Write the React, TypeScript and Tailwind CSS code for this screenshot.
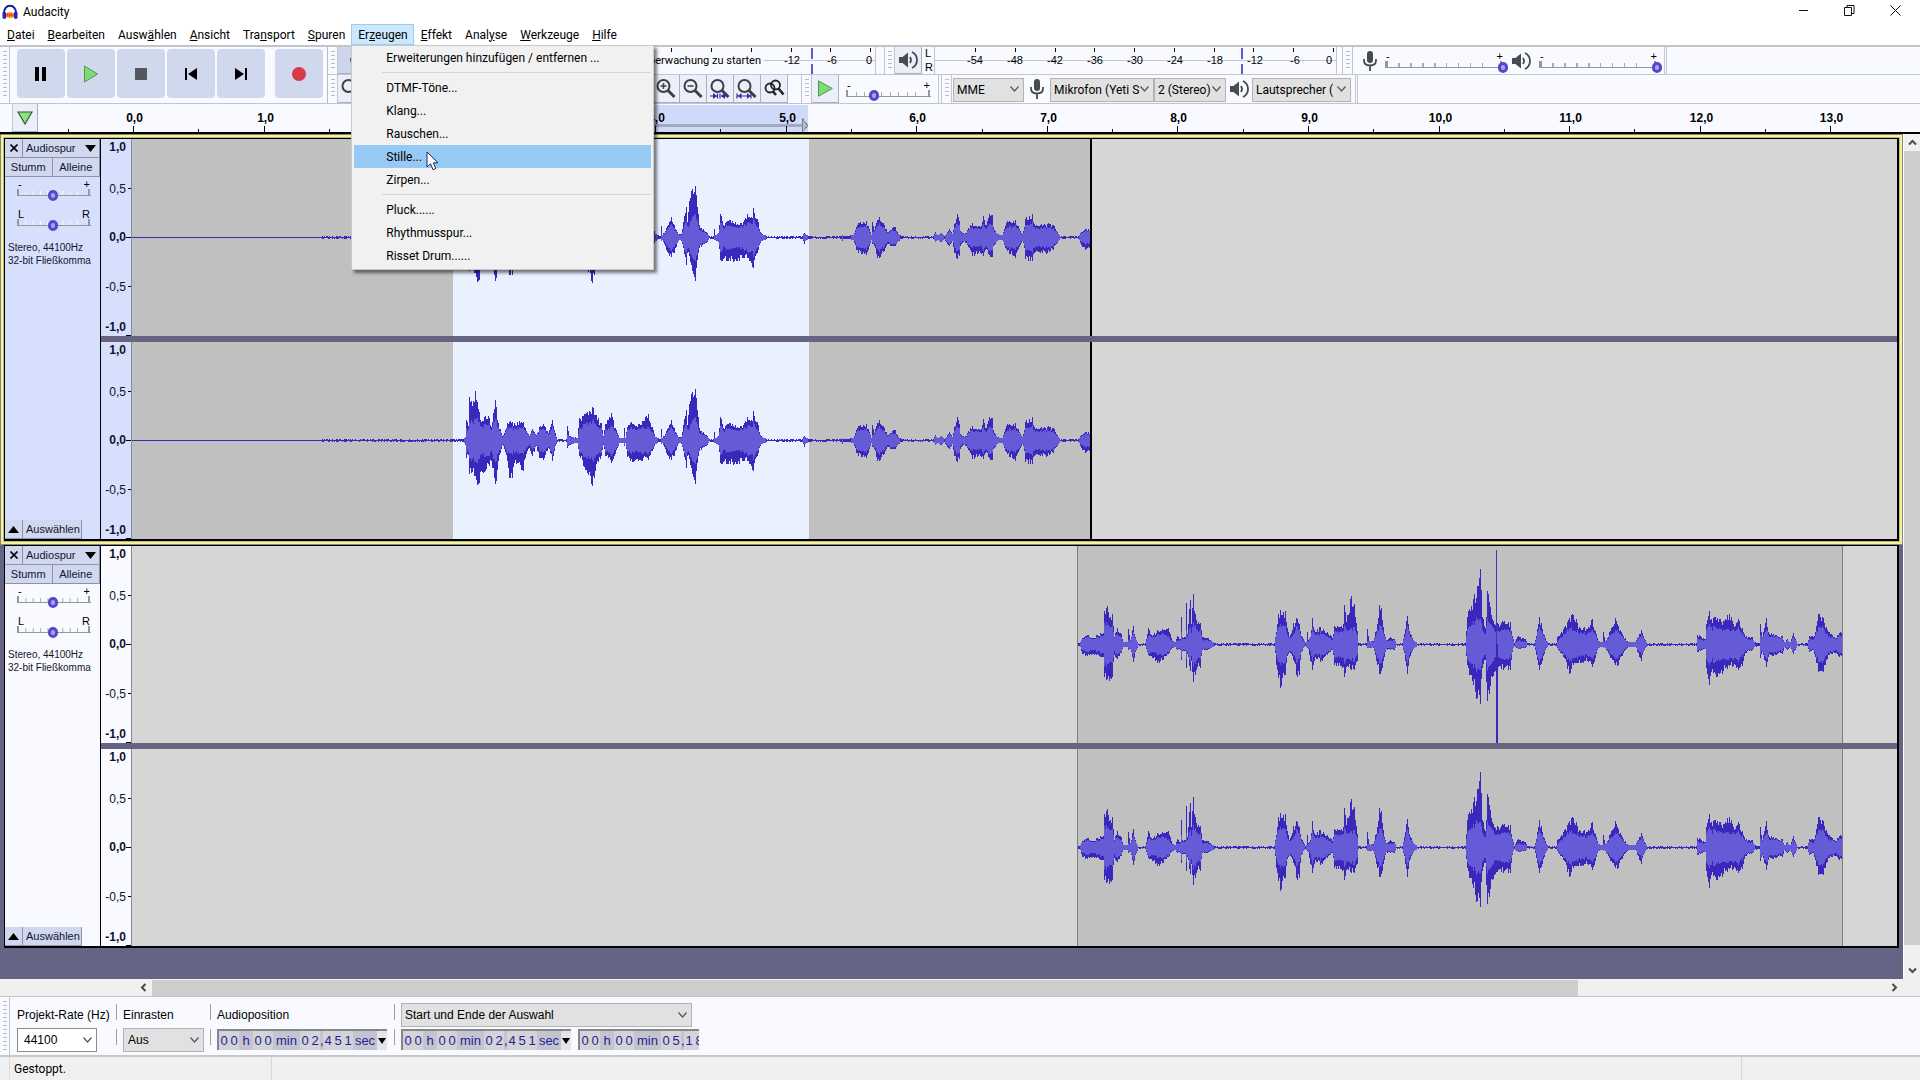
import type { ReactNode } from "react";

type Point = [x: number, top: number, bottom: number];

interface Clip {
  start: number;
  end: number;
  wave: Point[];
}

const RULER_ZERO = 96;
const SECOND = 130.55;

// envelope of the first clip: x, peak above the centre line, peak below it
const WAVE_A: Point[] = [
  [0, 0, 0], [188, 0, 0], [190, 1, 1], [331, 1, 1], [333, 3, 4], [334, 20, 17], [336, 14, 14], [337, 43, 33], [340, 34, 31],
  [343, 49, 35], [345, 38, 44], [347, 28, 42], [349, 18, 30], [353, 24, 30], [357, 22, 25], [359, 13, 20], [363, 40, 43],
  [364, 33, 40], [366, 17, 20], [370, 4, 4], [372, 7, 8], [375, 17, 20], [377, 18, 37], [380, 18, 37], [382, 17, 22],
  [391, 18, 30], [393, 12, 17], [397, 4, 7], [400, 11, 15], [404, 5, 5], [407, 13, 17], [411, 16, 19], [416, 7, 7],
  [420, 20, 20], [423, 7, 5], [425, 1, 1], [434, 1, 1], [435, 14, 7], [437, 4, 4], [445, 2, 2], [447, 22, 15], [455, 28, 32],
  [460, 33, 45], [463, 25, 30], [469, 17, 15], [471, 4, 4], [473, 16, 15], [479, 27, 22], [483, 12, 13], [487, 2, 2],
  [491, 2, 2], [492, 12, 5], [493, 2, 2], [495, 13, 16], [498, 17, 20], [508, 15, 19], [516, 26, 19], [520, 13, 10],
  [523, 3, 3], [528, 1, 1], [529, 11, 3], [530, 2, 2], [535, 11, 14], [539, 20, 19], [542, 12, 15], [546, 3, 3], [549, 3, 3],
  [551, 15, 10], [554, 30, 27], [555, 15, 15], [557, 36, 18], [560, 48, 33], [563, 51, 43], [565, 30, 22], [567, 12, 10],
  [575, 4, 4], [577, 1, 1], [581, 1, 1], [582, 8, 2], [583, 2, 2], [586, 4, 4], [588, 23, 22], [591, 12, 21], [598, 17, 23],
  [605, 13, 23], [611, 15, 20], [615, 23, 20], [619, 20, 25], [621, 29, 30], [625, 18, 15], [628, 5, 5], [631, 2, 2],
  [635, 1, 1], [670, 1, 1], [672, 4, 6], [674, 2, 2], [680, 1, 1], [709, 1, 1], [710, 2, 3], [711, 1, 1], [721, 2, 2],
  [724, 10, 12], [726, 14, 15], [734, 16, 17], [737, 8, 8], [739, 2, 2], [740, 15, 6], [742, 7, 8], [745, 17, 20],
  [747, 20, 20], [752, 12, 13], [755, 5, 6], [760, 9, 8], [763, 10, 8], [766, 3, 3], [769, 1, 1], [801, 1, 1], [803, 5, 4],
  [805, 2, 2], [809, 4, 4], [812, 1, 1], [817, 8, 8], [820, 3, 3], [822, 13, 15], [825, 23, 21], [827, 16, 18], [828, 6, 8],
  [832, 3, 3], [835, 7, 7], [840, 14, 18], [848, 10, 15], [851, 21, 18], [853, 12, 12], [857, 23, 17], [860, 22, 19],
  [861, 10, 8], [865, 3, 3], [870, 2, 2], [873, 11, 10], [875, 16, 13], [883, 17, 20], [886, 11, 11], [890, 3, 3],
  [892, 10, 10], [893, 18, 21], [900, 23, 23], [902, 13, 15], [908, 12, 15], [915, 13, 15], [921, 12, 12], [925, 5, 5],
  [928, 1, 1], [946, 1, 1], [949, 5, 7], [953, 8, 12], [958, 7, 10],
];

const WAVE_B: Point[] = [
  [945, 0, 0], [948, 2, 2], [950, 6, 9], [955, 9, 11], [961, 6, 9], [968, 11, 12], [971, 11, 12], [972, 33, 32], [974, 36, 35],
  [980, 30, 32], [982, 7, 10], [985, 16, 14], [989, 10, 8], [991, 2, 2], [995, 2, 2], [996, 15, 5], [998, 4, 4],
  [1001, 18, 17], [1003, 7, 7], [1006, 1, 1], [1013, 1, 1], [1016, 16, 10], [1020, 8, 13], [1025, 14, 18], [1031, 14, 15],
  [1036, 16, 9], [1040, 3, 3], [1043, 2, 2], [1045, 8, 5], [1048, 5, 5], [1049, 27, 15], [1050, 7, 6], [1053, 7, 6],
  [1054, 41, 23], [1055, 10, 9], [1058, 44, 26], [1059, 20, 16], [1061, 50, 37], [1063, 30, 30], [1065, 20, 22],
  [1068, 21, 23], [1070, 7, 5], [1075, 6, 5], [1080, 2, 2], [1083, 1, 1], [1142, 1, 1], [1144, 12, 20], [1146, 30, 33],
  [1148, 34, 43], [1153, 33, 30], [1155, 16, 11], [1157, 7, 7], [1161, 21, 15], [1165, 25, 32], [1167, 20, 30],
  [1169, 8, 7], [1173, 1, 1], [1174, 2, 2], [1175, 12, 3], [1176, 4, 4], [1178, 7, 16], [1180, 26, 25], [1183, 12, 12],
  [1188, 17, 17], [1195, 12, 10], [1200, 6, 5], [1202, 18, 20], [1211, 20, 22], [1212, 39, 32], [1214, 22, 22],
  [1219, 48, 25], [1222, 40, 25], [1225, 13, 16], [1226, 1, 1], [1234, 1, 1], [1235, 15, 3], [1237, 3, 3], [1241, 3, 3],
  [1245, 20, 20], [1247, 39, 29], [1249, 36, 26], [1252, 10, 12], [1254, 4, 4], [1258, 7, 5], [1262, 5, 5], [1264, 1, 1],
  [1270, 1, 1], [1272, 10, 8], [1275, 28, 29], [1277, 13, 13], [1281, 4, 4], [1285, 1, 1], [1333, 1, 1], [1335, 27, 20],
  [1337, 35, 30], [1341, 45, 40], [1345, 58, 53], [1348, 75, 59], [1350, 27, 23], [1353, 16, 15], [1355, 53, 56],
  [1358, 37, 41], [1362, 20, 27], [1366, 20, 22], [1371, 22, 25], [1378, 22, 25], [1380, 8, 7], [1382, 1, 1],
  [1386, 8, 4], [1393, 5, 3], [1395, 1, 1], [1402, 1, 1], [1404, 8, 10], [1407, 27, 25], [1410, 15, 16], [1414, 3, 3],
  [1416, 1, 1], [1424, 1, 1], [1425, 7, 3], [1431, 15, 12], [1437, 26, 29], [1441, 29, 20], [1448, 16, 18], [1455, 15, 16],
  [1460, 25, 22], [1463, 13, 13], [1466, 3, 3], [1470, 2, 2], [1471, 12, 3], [1473, 3, 3], [1478, 13, 13], [1483, 26, 20],
  [1486, 18, 20], [1491, 8, 8], [1496, 2, 2], [1503, 2, 2], [1509, 14, 16], [1511, 8, 7], [1515, 1, 1], [1564, 1, 1],
  [1565, 9, 7], [1573, 5, 4], [1574, 20, 23], [1577, 33, 40], [1579, 25, 27], [1585, 26, 32], [1591, 23, 26],
  [1597, 30, 21], [1601, 20, 21], [1606, 25, 25], [1610, 16, 21], [1613, 7, 8], [1620, 7, 5], [1622, 2, 2], [1627, 1, 1],
  [1628, 20, 13], [1630, 7, 7], [1634, 26, 22], [1636, 12, 12], [1645, 8, 9], [1650, 8, 9], [1652, 2, 2], [1655, 5, 5],
  [1658, 2, 2], [1661, 11, 9], [1663, 5, 5], [1665, 1, 1], [1675, 1, 1], [1677, 8, 7], [1681, 7, 5], [1684, 18, 18],
  [1686, 30, 27], [1691, 26, 27], [1696, 12, 10], [1703, 6, 8], [1710, 14, 14],
];

const CLIP_A: Clip = { start: 0, end: 958, wave: WAVE_A };
const CLIP_B: Clip = { start: 945, end: 1710, wave: WAVE_B };

function jitter(n: number) {
  const v = Math.sin(n * 12.9898) * 43758.5453;
  return v - Math.floor(v);
}

function wavePaths(points: Point[], mid: number) {
  let peak = "";
  let rms = "";
  for (let i = 0; i < points.length - 1; i++) {
    const [x0, t0, b0] = points[i];
    const [x1, t1, b1] = points[i + 1];
    for (let x = x0; x < x1; x++) {
      const f = (x - x0) / (x1 - x0);
      const edge = x === x0 ? 1 : 0.78 + jitter(x) * 0.3;
      const edgeLow = x === x0 ? 1 : 0.78 + jitter(x + 7000) * 0.3;
      let top = (t0 + (t1 - t0) * f) * edge;
      let bottom = (b0 + (b1 - b0) * f) * edgeLow;
      if (t0 === 1 && t1 === 1) {
        top = jitter(x) > 0.55 ? 1 : 0;
        bottom = jitter(x + 50) > 0.6 ? 1 : 0;
      }
      top = Math.round(top);
      bottom = Math.round(bottom);
      peak += `M${x} ${mid - top}v${top + bottom + 1}`;
      const m = Math.min(top, bottom);
      const r = Math.round((m * 0.85) / (1 + m / 60) + jitter(x + 300) * m * 0.1);
      if (r > 1) rms += `M${x} ${mid - r}v${r * 2 + 1}`;
    }
  }
  return { peak, rms };
}

function Channel({ clip, selected, spike }: { clip: Clip; selected?: boolean; spike?: boolean }) {
  const { peak, rms } = wavePaths(clip.wave, 98);
  return (
    <svg className="block h-[197px] w-full bg-[#d6d6d6]" shapeRendering="crispEdges">
      <rect x={clip.start} y="0" width={clip.end - clip.start} height="197" fill="#c0c0c0" />
      {selected && <rect x="321" y="0" width="356" height="197" fill="#e9f1fe" />}
      <g transform="translate(0.5 0)">
        <path d={peak} stroke="#3a28bd" fill="none" />
        <path d={rms} stroke="#655bd6" fill="none" />
      </g>
      {spike && <path d="M1364.5 4v94" stroke="#4336bd" />}
      {spike && <path d="M1365 98v99" stroke="#3a28bd" strokeWidth="2" />}
      {selected ? (
        <rect x="958" y="0" width="2" height="197" fill="#000" />
      ) : (
        <path d="M945.5 0v197M1710.5 0v197" stroke="#7d7d7d" />
      )}
    </svg>
  );
}

const LEVELS = [
  { label: "1,0", y: 12, bold: true },
  { label: "0,5", y: 54, tick: 49 },
  { label: "0,0", y: 102, tick: 98, bold: true },
  { label: "-0,5", y: 152, tick: 147 },
  { label: "-1,0", y: 192, tick: 196, bold: true },
];

function LevelRuler() {
  return (
    <svg className="block h-[197px] w-[31px] border-r border-[#8a8a96]">
      {LEVELS.map((l) => (
        <g key={l.label}>
          <text
            x="25"
            y={l.y}
            textAnchor="end"
            className={l.bold ? "text-[12px] font-bold" : "text-[12px]"}
            fill="#11112a"
          >
            {l.label}
          </text>
          {l.tick && <path d={`M${l.bold ? 25 : 27} ${l.tick + 0.5}H30`} stroke="#000" />}
        </g>
      ))}
    </svg>
  );
}

interface SliderProps {
  label: string;
  value: number;
  width: string;
  left?: string;
  right?: string;
  light?: boolean;
}

function Slider({ label, value, width, left = "-", right = "+", light }: SliderProps) {
  return (
    <label className={`relative block ${width}`} aria-label={label}>
      <span className="flex h-[9px] justify-between px-px text-[11px] leading-[9px] text-black">
        <span>{left}</span>
        <span>{right}</span>
      </span>
      <svg className="block h-2 w-full" viewBox="0 0 80 8" preserveAspectRatio="none" shapeRendering="crispEdges">
        <path
          d="M9.5 2v4M17.5 2v4M25.5 2v4M33.5 2v4M41.5 2v4M49.5 2v4M57.5 2v4M65.5 2v4"
          stroke={light ? "#fff" : "#a9abb3"}
        />
        <path d="M1 0v6M78 0v6M0 6.5h80" stroke="#94979e" strokeWidth="1.5" />
      </svg>
      <input
        type="range"
        defaultValue={value}
        className="absolute -left-1 bottom-[-4px] m-0 h-3 w-[calc(100%+8px)] appearance-none bg-transparent [&::-webkit-slider-thumb]:h-[11px] [&::-webkit-slider-thumb]:w-[10px] [&::-webkit-slider-thumb]:appearance-none [&::-webkit-slider-thumb]:rounded-full [&::-webkit-slider-thumb]:border-[3px] [&::-webkit-slider-thumb]:border-[#5448c8] [&::-webkit-slider-thumb]:bg-[#a9a4ee]"
      />
    </label>
  );
}

const TRACK_BUTTON =
  "flex items-center border-r border-b border-[#8c93a8] bg-[#cfd8ee] text-[11px] text-[#15152c]";

function TrackPanel({ selected }: { selected?: boolean }) {
  return (
    <div className={`flex w-[96px] shrink-0 flex-col border-r border-black ${selected ? "bg-[#d6e0fd]" : "bg-[#f9faff]"}`}>
      <div className="flex h-[19px]">
        <button aria-label="Spur schließen" className={`${TRACK_BUTTON} w-[18px] justify-center`}>
          <svg className="h-2 w-2" viewBox="0 0 8 8" stroke="#000" strokeWidth="1.6">
            <path d="M.5 .5l7 7M7.5 .5l-7 7" />
          </svg>
        </button>
        <button className={`${TRACK_BUTTON} flex-1 justify-between px-[3px]`}>
          Audiospur
          <svg className="h-[7px] w-[11px]" viewBox="0 0 11 7">
            <path d="M0 0h11L5.500 7z" />
          </svg>
        </button>
      </div>
      <div className="flex h-[19px]">
        <button className={`${TRACK_BUTTON} flex-1 justify-center`}>Stumm</button>
        <button className={`${TRACK_BUTTON} flex-1 justify-center`}>Alleine</button>
      </div>
      <div className="flex flex-col gap-[13px] px-3 pt-[3px]">
        <Slider label="Lautstärke" value={48} width="w-[74px]" light={selected} />
        <Slider label="Balance" value={48} width="w-[74px]" left="L" right="R" light={selected} />
      </div>
      <p className="pt-[14px] pl-[3px] text-[10px] leading-[13px] whitespace-nowrap text-[#15152c]">
        Stereo, 44100Hz
        <br />
        32-bit Fließkomma
      </p>
      <div className="mt-auto flex h-[19px]">
        <button aria-label="Spur einklappen" className={`${TRACK_BUTTON} w-[18px] justify-center`}>
          <svg className="h-[7px] w-[11px]" viewBox="0 0 11 7">
            <path d="M0 7h11L5.500 0z" />
          </svg>
        </button>
        <button className={`${TRACK_BUTTON} w-[59px] pl-[3px]`}>Auswählen</button>
      </div>
    </div>
  );
}

function Track({ clip, selected, spike }: { clip: Clip; selected?: boolean; spike?: boolean }) {
  const body = (
    <div className="flex border-t border-r-2 border-b-2 border-l border-black">
      <TrackPanel selected={selected} />
      <div className="flex min-w-0 flex-1 flex-col">
        {[0, 1].map((n) => (
          <div key={n} className={n ? "flex" : "flex border-b-6 border-[#666480]"}>
            <div className={selected ? "bg-[#d6e0fd]" : "bg-[#f9faff]"}>
              <LevelRuler />
            </div>
            <div className="min-w-0 flex-1">
              <Channel clip={clip} selected={selected} spike={spike && n === 0} />
            </div>
          </div>
        ))}
      </div>
    </div>
  );
  if (!selected) return <div className="mx-1">{body}</div>;
  return (
    <div className="border border-[#85857a]">
      <div className="border-2 border-[#f3f3a2]">
        <div className="border border-[#bdbb78]">{body}</div>
      </div>
    </div>
  );
}

function Grip() {
  return (
    <div className="flex w-[10px] shrink-0 justify-center border-r border-[#c3c5cf] py-1">
      <div className="w-1 bg-[repeating-linear-gradient(to_bottom,#b9bcc4_0_1px,transparent_1px_4px)]" />
    </div>
  );
}

function Tool({ label, children, className = "w-[27px] bg-[#ebeffa]" }: { label: string; children: ReactNode; className?: string }) {
  return (
    <button
      aria-label={label}
      className={`flex shrink-0 items-center justify-center border-r border-b border-[#a9b0c0] ${className}`}
    >
      {children}
    </button>
  );
}

function SpeakerIcon() {
  return (
    <svg className="h-[18px] w-[19px] shrink-0" viewBox="0 0 19 18" fill="none" stroke="#474a4f" strokeWidth="1.8">
      <path d="M0 6h3.500L9 1.500v15L3.500 12H0z" fill="#474a4f" stroke="none" />
      <path d="M11 6q2 3 0 6" />
      <path d="M13 1q5 2.500 5 8t-5 8" />
    </svg>
  );
}

function MicIcon() {
  return (
    <svg className="h-5 w-[14px] shrink-0" viewBox="0 0 14 20" fill="none" stroke="#474a4f" strokeWidth="1.8">
      <rect x="4" y="0" width="6" height="12" rx="3" fill="#474a4f" stroke="none" />
      <path d="M1 8v1.500q0 5 6 5t6-5V8M7 15v5" />
    </svg>
  );
}

function Magnifier({ children }: { children?: ReactNode }) {
  return (
    <svg className="h-[22px] w-[22px] shrink-0" viewBox="0 0 22 22" fill="none" stroke="#3c3f44" strokeWidth="2">
      <circle cx="8.500" cy="8" r="6" />
      <path d="M13 12.500l6.500 6.500" strokeWidth="3" />
      {children}
    </svg>
  );
}

function PlayIcon({ className }: { className: string }) {
  return (
    <svg className={className} viewBox="0 0 15 17">
      <path d="M.5 .8L14.300 8.500L.5 16.200z" fill="#7fdc75" stroke="#4c9a4a" />
    </svg>
  );
}

interface MeterProps {
  labels: { text: string; x: number }[];
  ticks: number[];
  level: number;
  note?: string;
}

function Meter({ labels, ticks, level, note }: MeterProps) {
  return (
    <svg className="block h-[27px] w-full">
      <path d="M0 13.500H600" stroke="#c3c6ce" />
      {note && (
        <>
          <rect x="150" y="6" width="237" height="15" fill="#f9faff" />
          <text x="384" y="17" textAnchor="end" className="font-[Roboto] text-[11px]">
            {note}
          </text>
        </>
      )}
      <path d={ticks.map((t) => `M${t}.500 1v4`).join("")} stroke="#000" />
      {labels.map((l) => (
        <text key={l.text} x={l.x} y="17" textAnchor="middle" className="text-[11px]">
          {l.text}
        </text>
      ))}
      <path d={`M${level} 1v11M${level} 17v10`} stroke="#6459cf" strokeWidth="2" />
    </svg>
  );
}

function Dropdown({ label, value, width }: { label: string; value: string; width: string }) {
  return (
    <div className={`relative shrink-0 ${width}`}>
      <select
        aria-label={label}
        className="h-6 w-full appearance-none overflow-hidden border border-[#b3b3b3] bg-[#e1e1e1] pr-3 pl-[3px] font-[Roboto] text-[12px] text-black"
      >
        <option>{value}</option>
      </select>
      <Chevron />
    </div>
  );
}

function Chevron() {
  return (
    <svg className="pointer-events-none absolute top-[9px] right-[5px] h-[6px] w-[9px]" viewBox="0 0 9 6" fill="none" stroke="#555">
      <path d="M.5 .5l4 4.500l4-4.500" strokeWidth="1.2" />
    </svg>
  );
}

const TRANSPORT = [
  { label: "Pause", icon: <path d="M2 2h4v14H2zM9 2h4v14H9z" /> },
  { label: "Wiedergabe", icon: <path d="M1.500 1l13 8l-13 8z" fill="#7fdc75" stroke="#4c9a4a" /> },
  { label: "Stopp", icon: <path d="M2 3h12v12H2z" fill="#54575c" /> },
  { label: "Zum Anfang", icon: <path d="M2 3h2v12H2zM14 3v12L5 9z" /> },
  { label: "Zum Ende", icon: <path d="M12 3h2v12h-2zM2 3v12l9-6z" /> },
];

function Transport() {
  return (
    <div className="flex border-r border-[#b9bcc8]">
      <Grip />
      <div className="flex gap-[2px] pt-[2px] pr-1 pb-[5px] pl-[7px]">
        {TRANSPORT.map((t) => (
          <button key={t.label} aria-label={t.label} className="flex w-12 items-center justify-center rounded-[4px] bg-[#d0d8ee]">
            <svg className="h-[18px] w-4" viewBox="0 0 16 18">
              {t.icon}
            </svg>
          </button>
        ))}
        <button aria-label="Aufnahme" className="ml-2 flex w-12 items-center justify-center rounded-[4px] bg-[#d0d8ee]">
          <span className="h-[14px] w-[14px] rounded-full bg-[#d63a4b]" />
        </button>
      </div>
    </div>
  );
}

function Toolbars() {
  return (
    <div className="flex h-[59px] border-t-2 border-b border-[#c3c3cc] bg-[#f9faff]">
      <Transport />
      <div className="flex min-w-0 flex-1 flex-col">
        <div className="flex h-7 border-b border-[#c3c5cf]">
          <Grip />
          <Tool label="Aufnahmepegel" className="w-[39px] bg-[#cdd5ec]">
            <MicIcon />
          </Tool>
          <div className="w-[499px] shrink-0 border-r border-[#c3c5cf]">
            <Meter
              note="Klicken, um Überwachung zu starten"
              labels={[
                { text: "-12", x: 415 },
                { text: "-6", x: 455 },
                { text: "0", x: 492 },
              ]}
              ticks={[135, 175, 215, 254, 294, 334, 374, 414, 453, 493]}
              level={435}
            />
          </div>
          <div className="w-[9px] shrink-0 border-r border-[#c3c5cf]" />
          <Grip />
          <Tool label="Wiedergabepegel">
            <SpeakerIcon />
          </Tool>
          <div className="flex w-[13px] shrink-0 flex-col justify-between border-r border-[#c3c5cf] px-[3px] text-[11px] leading-[13px]">
            <span>L</span>
            <span>R</span>
          </div>
          <div className="w-[402px] shrink-0 border-r border-[#c3c5cf]">
            <Meter
              labels={[-54, -48, -42, -36, -30, -24, -18, -12, -6, 0].map((v, i) => ({
                text: String(v),
                x: i === 9 ? 394 : 40 + i * 40,
              }))}
              ticks={[40, 80, 120, 159, 199, 239, 279, 318, 358, 398]}
              level={307}
            />
          </div>
          <div className="w-[6px] shrink-0 border-r border-[#c3c5cf]" />
          <Grip />
          <div className="flex items-center gap-2 pr-[6px] pl-[10px]">
            <MicIcon />
            <Slider label="Aufnahmelautstärke" value={100} width="w-[119px]" />
            <SpeakerIcon />
            <Slider label="Wiedergabelautstärke" value={100} width="w-[119px]" />
          </div>
          <div className="w-[3px] shrink-0 border-x border-[#c3c5cf]" />
        </div>
        <div className="flex h-7">
          <Grip />
          <Tool label="Zoomwerkzeug">
            <Magnifier />
          </Tool>
          <div className="w-[288px] shrink-0" />
          <Tool label="Einzoomen">
            <Magnifier>
              <path d="M8.500 5v6M5.500 8h6" strokeWidth="1.500" />
            </Magnifier>
          </Tool>
          <Tool label="Auszoomen">
            <Magnifier>
              <path d="M5.500 8h6" strokeWidth="1.500" />
            </Magnifier>
          </Tool>
          <Tool label="Auswahl einpassen">
            <Magnifier>
              <path d="M8.500 15.500v5M11 15.500v5M1 18h7M12 18h7" stroke="#352a9e" strokeWidth="1.200" />
              <path d="M4 15l4 3l-4 3zM16 15l-4 3l4 3z" fill="#352a9e" stroke="none" />
            </Magnifier>
          </Tool>
          <Tool label="Projekt einpassen">
            <Magnifier>
              <path d="M1 15.500v5M15 15.500v5M1 18h14" stroke="#352a9e" strokeWidth="1.200" />
              <path d="M5.500 15L2 18l3.500 3zM11 15l3.500 3l-3.500 3z" fill="#352a9e" stroke="none" />
            </Magnifier>
          </Tool>
          <Tool label="Zoom umschalten">
            <svg className="h-[22px] w-[22px]" viewBox="0 0 22 22" fill="none" stroke="#222428" strokeWidth="1.800">
              <circle cx="7" cy="10" r="4.500" />
              <circle cx="12.500" cy="7" r="4.500" />
              <path d="M10 13.500l3 3.500M15.500 10.500l5 6" strokeWidth="2.600" />
            </svg>
          </Tool>
          <div className="w-[14px] shrink-0 border-r border-[#c3c5cf]" />
          <Grip />
          <Tool label="Wiedergabe mit Geschwindigkeit">
            <PlayIcon className="h-[17px] w-[15px]" />
          </Tool>
          <div className="flex items-center pr-[7px] pl-[7px]">
            <Slider label="Geschwindigkeit" value={32} width="w-[85px]" />
          </div>
          <div className="w-1 shrink-0 border-x border-[#c3c5cf]" />
          <Grip />
          <div className="flex items-center pr-1 pl-px">
            <Dropdown label="Audio-Host" value="MME" width="w-[71px]" />
            <span className="flex w-[26px] justify-center">
              <MicIcon />
            </span>
            <Dropdown label="Aufnahmegerät" value="Mikrofon (Yeti S" width="w-[104px]" />
            <Dropdown label="Aufnahmekanäle" value="2 (Stereo)" width="w-[72px]" />
            <span className="flex w-[26px] justify-center">
              <SpeakerIcon />
            </span>
            <Dropdown label="Wiedergabegerät" value="Lautsprecher (" width="w-[99px]" />
          </div>
          <div className="w-[3px] shrink-0 border-x border-[#c3c5cf]" />
        </div>
      </div>
    </div>
  );
}

function Timeline() {
  const marks = Array.from({ length: 28 }, (_, i) => (i - 1) / 2);
  return (
    <div className="flex h-[30px] border-b-2 border-black bg-[#f9faff]">
      <div className="w-[13px] shrink-0 border-r border-[#c3c5cf]" />
      <Tool label="Abspielkopf fixieren" className="w-[25px] bg-[#ebeffa]">
        <svg className="h-[14px] w-4" viewBox="0 0 16 14">
          <path d="M1 1h14L8 13z" fill="#8fe07e" stroke="#2e5c33" strokeWidth="1.200" />
        </svg>
      </Tool>
      <svg className="block h-7 min-w-0 flex-1" shapeRendering="crispEdges">
        <rect x="415" y="1" width="355" height="27" fill="#cfdafa" />
        <rect x="415" y="20" width="355" height="3" fill="#a3aabf" />
        <path d="M764.500 15l5 6.500l-5 6.500z" fill="#b9bfd0" stroke="#7b8193" />
        {marks.map((s) => {
          const x = Math.round(RULER_ZERO + s * SECOND) - 0.5;
          return Number.isInteger(s) ? (
            <g key={s}>
              <path d={`M${x} 22v6`} stroke="#000" />
              <text x={x + 1} y="18" textAnchor="middle" className="text-[12px] font-bold">
                {s},0
              </text>
            </g>
          ) : (
            <path key={s} d={`M${x} 25v3`} stroke="#000" />
          );
        })}
      </svg>
    </div>
  );
}

const MENUS = [
  ["", "D", "atei"],
  ["", "B", "earbeiten"],
  ["Ausw", "ä", "hlen"],
  ["", "A", "nsicht"],
  ["Tra", "n", "sport"],
  ["", "S", "puren"],
  ["Er", "z", "eugen"],
  ["", "E", "ffekt"],
  ["Anal", "y", "se"],
  ["", "W", "erkzeuge"],
  ["", "H", "ilfe"],
];

const GENERATE = [
  ["Erweiterungen hinzufügen / entfernen ..."],
  ["DTMF-Töne...", "Klang...", "Rauschen...", "Stille...", "Zirpen..."],
  ["Pluck......", "Rhythmusspur...", "Risset Drum......"],
];

function GenerateMenu() {
  return (
    <div
      role="menu"
      className="absolute top-full left-0 z-10 w-[303px] border border-[#c9c9c9] bg-[#f1f1f1] px-[2px] pb-[2px] shadow-[3px_3px_3px_rgba(0,0,0,0.5)]"
    >
      {GENERATE.map((group, i) => (
        <div key={i}>
          {i > 0 && <div className="my-[3px] ml-7 h-px bg-[#d4d4d4]" />}
          {group.map((item) => (
            <button
              key={item}
              role="menuitem"
              className={`block h-[23px] w-full pl-8 text-left ${item === "Stille..." ? "bg-[#96c9f3]" : ""}`}
            >
              {item}
            </button>
          ))}
        </div>
      ))}
      <svg className="absolute top-[105px] left-[74px] h-5 w-[13px]" viewBox="0 0 13 20">
        <path d="M1 1v15l3.500-3.300l2.500 6l2.800-1.200l-2.500-5.700H12z" fill="#fff" stroke="#1c2d4a" />
      </svg>
    </div>
  );
}

function Header() {
  return (
    <header className="bg-white font-[Roboto] text-[12px]">
      <div className="flex h-6 items-center pr-[2px] pl-[2px]">
        <svg className="h-4 w-4" viewBox="0 0 16 16" fill="none">
          <path d="M3 10q5 -4 10 0v3q-5 2-10 0z" fill="#f5a331" />
          <path d="M4.500 11h7" stroke="#e2402a" strokeWidth="3" strokeDasharray="1.500 .5" />
          <path d="M2 10C1 -1 15 -1 14 10" stroke="#1a1f9c" strokeWidth="2" />
          <rect x="0.500" y="7.500" width="3.500" height="7.500" rx="1.700" fill="#2227b5" />
          <rect x="12" y="7.500" width="3.500" height="7.500" rx="1.700" fill="#2227b5" />
        </svg>
        <h1 className="ml-[5px]">Audacity</h1>
        <div className="ml-auto flex h-[21px] items-center self-start">
          <button aria-label="Minimieren" className="flex w-[46px] justify-center">
            <svg className="h-[11px] w-[11px]" viewBox="0 0 11 11" stroke="#111">
              <path d="M1 5.500h9" />
            </svg>
          </button>
          <button aria-label="Verkleinern" className="flex w-[46px] justify-center">
            <svg className="h-[11px] w-[11px]" viewBox="0 0 11 11" fill="none" stroke="#111">
              <path d="M.5 2.500h7v8h-7zM3 2.500v-2h7v8H7.500" />
            </svg>
          </button>
          <button aria-label="Schließen" className="flex w-[46px] justify-center">
            <svg className="h-[11px] w-[11px]" viewBox="0 0 11 11" stroke="#111">
              <path d="M.5 .5l10 10M10.500 .5l-10 10" />
            </svg>
          </button>
        </div>
      </div>
      <nav className="flex h-[21px]">
        {MENUS.map(([before, key, after]) => {
          const open = before === "Er";
          return (
            <div key={before + key + after} className="relative">
              <button
                className={`h-[21px] border pr-[5px] pl-[6px] ${open ? "border-[#9fcdf0] bg-[#cce8ff]" : "border-transparent"}`}
              >
                {before}
                <span className="underline">{key}</span>
                {after}
              </button>
              {open && <GenerateMenu />}
            </div>
          );
        })}
      </nav>
    </header>
  );
}

function TimeField({ label, parts }: { label: string; parts: string[] }) {
  return (
    <div
      role="group"
      aria-label={label}
      className="flex h-[21px] shrink-0 items-center border-t-2 border-l-2 border-[#85858c] bg-[#c3c4d0] text-[13px] text-[#241f94]"
    >
      {parts.map((p, i) =>
        /^\d$/.test(p) ? (
          <span key={i} className="w-[10px] bg-[#d3d3d8] text-center leading-[19px]">
            {p}
          </span>
        ) : (
          <span
            key={i}
            className={`text-center ${p === "," ? "w-[3px]" : p === "h" ? "w-[14px]" : p === "min" ? "w-[27px]" : "w-6"}`}
          >
            {p}
          </span>
        ),
      )}
    </div>
  );
}

function timeParts(seconds: string) {
  return ["0", "0", "h", "0", "0", "min", ...seconds.split(""), "sec"];
}

function TimeCaret() {
  return (
    <button
      aria-label="Format"
      className="flex h-[21px] w-[10px] shrink-0 items-center justify-center border-t-2 border-[#85858c] bg-[#e4e4ea]"
    >
      <svg className="h-[6px] w-2" viewBox="0 0 8 6">
        <path d="M0 0h8L4 6z" />
      </svg>
    </button>
  );
}

function Divider() {
  return (
    <div className="flex w-[13px] shrink-0 flex-col items-center gap-[9px] pt-[7px]">
      <div className="h-4 w-px bg-[#a0a0a0]" />
      <div className="h-4 w-px bg-[#a0a0a0]" />
    </div>
  );
}

function SelectionBar() {
  return (
    <div className="flex h-[58px] bg-[#f9faff] text-[12px]">
      <Grip />
      <div className="ml-[7px] w-[93px] pt-[6px]">
        <label htmlFor="rate" className="block h-[25px] leading-6 whitespace-nowrap">
          Projekt-Rate (Hz)
        </label>
        <div className="relative w-20">
          <select id="rate" className="h-6 w-full appearance-none border border-[#8c8c8c] bg-white pl-[6px]">
            <option>44100</option>
          </select>
          <Chevron />
        </div>
      </div>
      <Divider />
      <div className="w-[81px] pt-[6px]">
        <label htmlFor="snap" className="block h-[25px] leading-6">
          Einrasten
        </label>
        <div className="relative">
          <select id="snap" className="h-6 w-full appearance-none border border-[#b3b3b3] bg-[#e1e1e1] pl-1">
            <option>Aus</option>
          </select>
          <Chevron />
        </div>
      </div>
      <Divider />
      <div className="w-[171px] pt-[6px]">
        <span className="block h-[26px] leading-6">Audioposition</span>
        <div className="flex">
          <TimeField label="Audioposition" parts={timeParts("02,451")} />
          <TimeCaret />
        </div>
      </div>
      <Divider />
      <div className="pt-[6px]">
        <div className="relative mb-[2px] w-[291px]">
          <select aria-label="Auswahlmodus" className="h-6 w-full appearance-none border border-[#b3b3b3] bg-[#e1e1e1] pl-[3px]">
            <option>Start und Ende der Auswahl</option>
          </select>
          <Chevron />
        </div>
        <div className="flex w-[298px] overflow-hidden">
          <TimeField label="Auswahlbeginn" parts={timeParts("02,451")} />
          <TimeCaret />
          <div className="w-[7px] shrink-0" />
          <TimeField label="Auswahlende" parts={timeParts("05,180")} />
        </div>
      </div>
    </div>
  );
}

function Arrow({ d }: { d: string }) {
  return (
    <svg className="h-[9px] w-[9px]" viewBox="0 0 9 9" fill="none" stroke="#4b4b4b" strokeWidth="2">
      <path d={d} />
    </svg>
  );
}

export default function App() {
  return (
    <div className="flex h-screen flex-col overflow-hidden bg-[#f0f0f0] font-['Liberation_Sans',sans-serif] text-black">
      <Header />
      <Toolbars />
      <Timeline />
      <main className="flex min-h-0 flex-1">
        <div className="min-w-0 flex-1 bg-[#666485]">
          <Track clip={CLIP_A} selected />
          <Track clip={CLIP_B} spike />
        </div>
        <div className="flex w-[17px] flex-col items-center border-l border-white bg-[#f0f0f0]">
          <button aria-label="Nach oben" className="flex h-[17px] items-center">
            <Arrow d="M1 6.500l3.500-3.500L8 6.500" />
          </button>
          <div className="min-h-0 w-full flex-1 bg-[#cdcdcd]" />
          <button aria-label="Nach unten" className="flex h-[34px] items-end pb-1">
            <Arrow d="M1 2.500L4.500 6L8 2.500" />
          </button>
        </div>
      </main>
      <div className="flex h-[18px] items-center border-b border-[#c3c3c8] bg-[#f0f0f0] pr-[21px] pl-[139px]">
        <button aria-label="Nach links" className="mr-1">
          <Arrow d="M6.500 1L3 4.500L6.500 8" />
        </button>
        <div className="h-4 w-[81%] bg-[#cdcdcd]" />
        <button aria-label="Nach rechts" className="ml-auto">
          <Arrow d="M2.500 1L6 4.500L2.500 8" />
        </button>
      </div>
      <SelectionBar />
      <footer className="flex h-[25px] border-t-2 border-[#c8c8c8] bg-[#f0f0f0] font-[Roboto] text-[12px] leading-[25px]">
        <div className="w-[10px] border-r border-[#dcdcdc]" />
        <div className="w-[262px] border-r border-[#d7d7d7] pl-1">Gestoppt.</div>
        <div className="flex-1 border-r border-[#d7d7d7]" />
        <div className="w-[178px]" />
      </footer>
    </div>
  );
}
